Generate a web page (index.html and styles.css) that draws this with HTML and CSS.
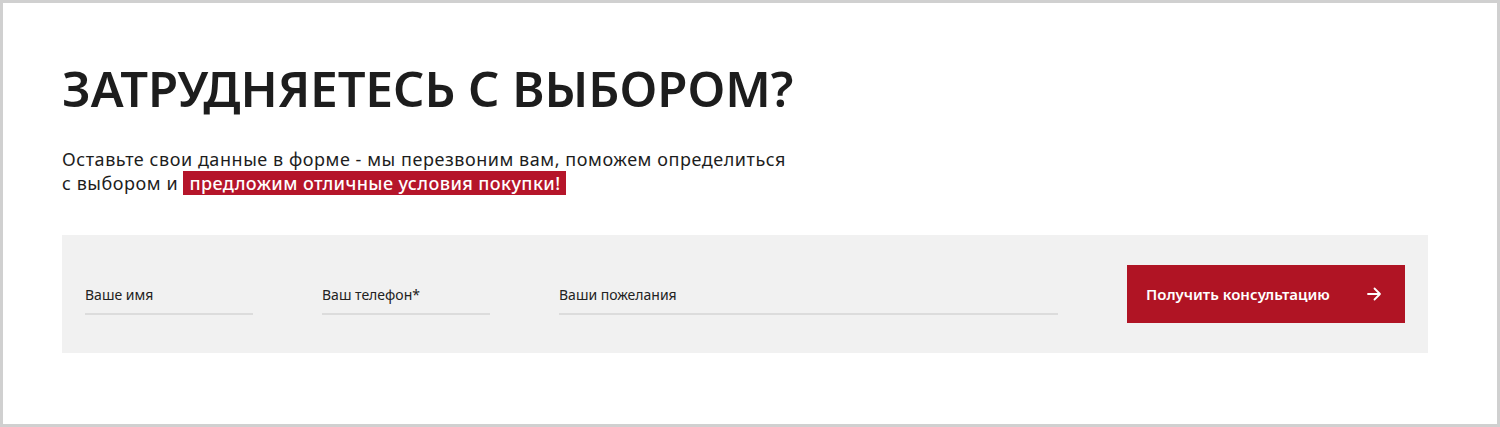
FILE: index.html
```html
<!DOCTYPE html>
<html lang="ru">
<head>
    <meta charset="UTF-8">
    <meta name="viewport" content="width=device-width, initial-scale=1.0">
    <title>Затрудняетесь с выбором?</title>
    <link rel="stylesheet" href="styles.css">
</head>
<body>

<div class="marco">
    <section class="consulta">
        <!-- Título -->
        <h2 class="titulo">ЗАТРУДНЯЕТЕСЬ С ВЫБОРОМ?</h2>

        <!-- Texto con la parte destacada -->
        <p class="texto">
            Оставьте свои данные в форме - мы перезвоним вам, поможем определиться<br>
            с выбором и <span class="destacado">предложим отличные условия покупки!</span>
        </p>

        <!-- Formulario -->
        <form class="formulario" onsubmit="return false;">
            <label class="campo campo-corto">
                <input type="text" placeholder="Ваше имя">
            </label>
            <label class="campo campo-corto">
                <input type="tel" placeholder="Ваш телефон*">
            </label>
            <label class="campo campo-largo">
                <input type="text" placeholder="Ваши пожелания">
            </label>
            <button class="boton" type="submit">
                <span>Получить консультацию</span>
                <svg width="16" height="16" viewBox="0 0 16 16" fill="none" stroke="#fff" stroke-width="1.8" stroke-linecap="round" stroke-linejoin="round">
                    <path d="M2 8h12M8.5 2.5L14 8l-5.5 5.5"/>
                </svg>
            </button>
        </form>
    </section>
</div>

</body>
</html>
```

FILE: styles.css
```css
body {
    margin: 0;
    padding: 0;
    background: #ffffff;
    font-family: "Noto Sans", Arial, sans-serif;
    color: #1c1c1c;
}

/* Marco gris alrededor de la página */
.marco {
    box-sizing: border-box;
    height: 427px;
    border: 3px solid #d0d0d0;
    background: #ffffff;
}

.consulta {
    padding: 53px 0 0 59px;
}

/* Título */
.titulo {
    margin: 0;
    font-size: 49px;
    line-height: 64px;
    font-weight: 600;
    letter-spacing: 0;
    color: #1d1d1d;
}

/* Texto */
.texto {
    margin: 27px 0 0 0;
    font-size: 18px;
    line-height: 24px;
    letter-spacing: 0.55px;
    color: #1d1d1d;
}

.destacado {
    background: #b5152a;
    color: #ffffff;
    padding: 0 6px;
    font-weight: 500;
    letter-spacing: 0.4px;
}

/* Formulario gris */
.formulario {
    box-sizing: border-box;
    width: 1366px;
    height: 118px;
    margin: 40px 0 0 0;
    padding: 30px 23px 0 23px;
    background: #f1f1f1;
    display: flex;
    align-items: flex-start;
    gap: 69px;
}

.campo {
    display: block;
    border-bottom: 2px solid #dcdcdc;
}

.campo-corto {
    width: 168px;
}

.campo-largo {
    width: 499px;
}

.campo input {
    box-sizing: border-box;
    width: 100%;
    height: 48px;
    padding: 20px 0 10px 0;
    border: none;
    background: transparent;
    font-family: "Noto Sans", Arial, sans-serif;
    font-size: 14px;
    line-height: 18px;
    color: #1d1d1d;
    outline: none;
}

.campo input::placeholder {
    color: #222222;
}

/* Botón rojo */
.boton {
    box-sizing: border-box;
    width: 278px;
    height: 58px;
    padding: 0 23px 0 19px;
    border: none;
    background: #b01424;
    color: #ffffff;
    font-family: "Noto Sans", Arial, sans-serif;
    font-size: 15px;
    font-weight: 600;
    display: flex;
    align-items: center;
    justify-content: space-between;
    cursor: pointer;
}
```
